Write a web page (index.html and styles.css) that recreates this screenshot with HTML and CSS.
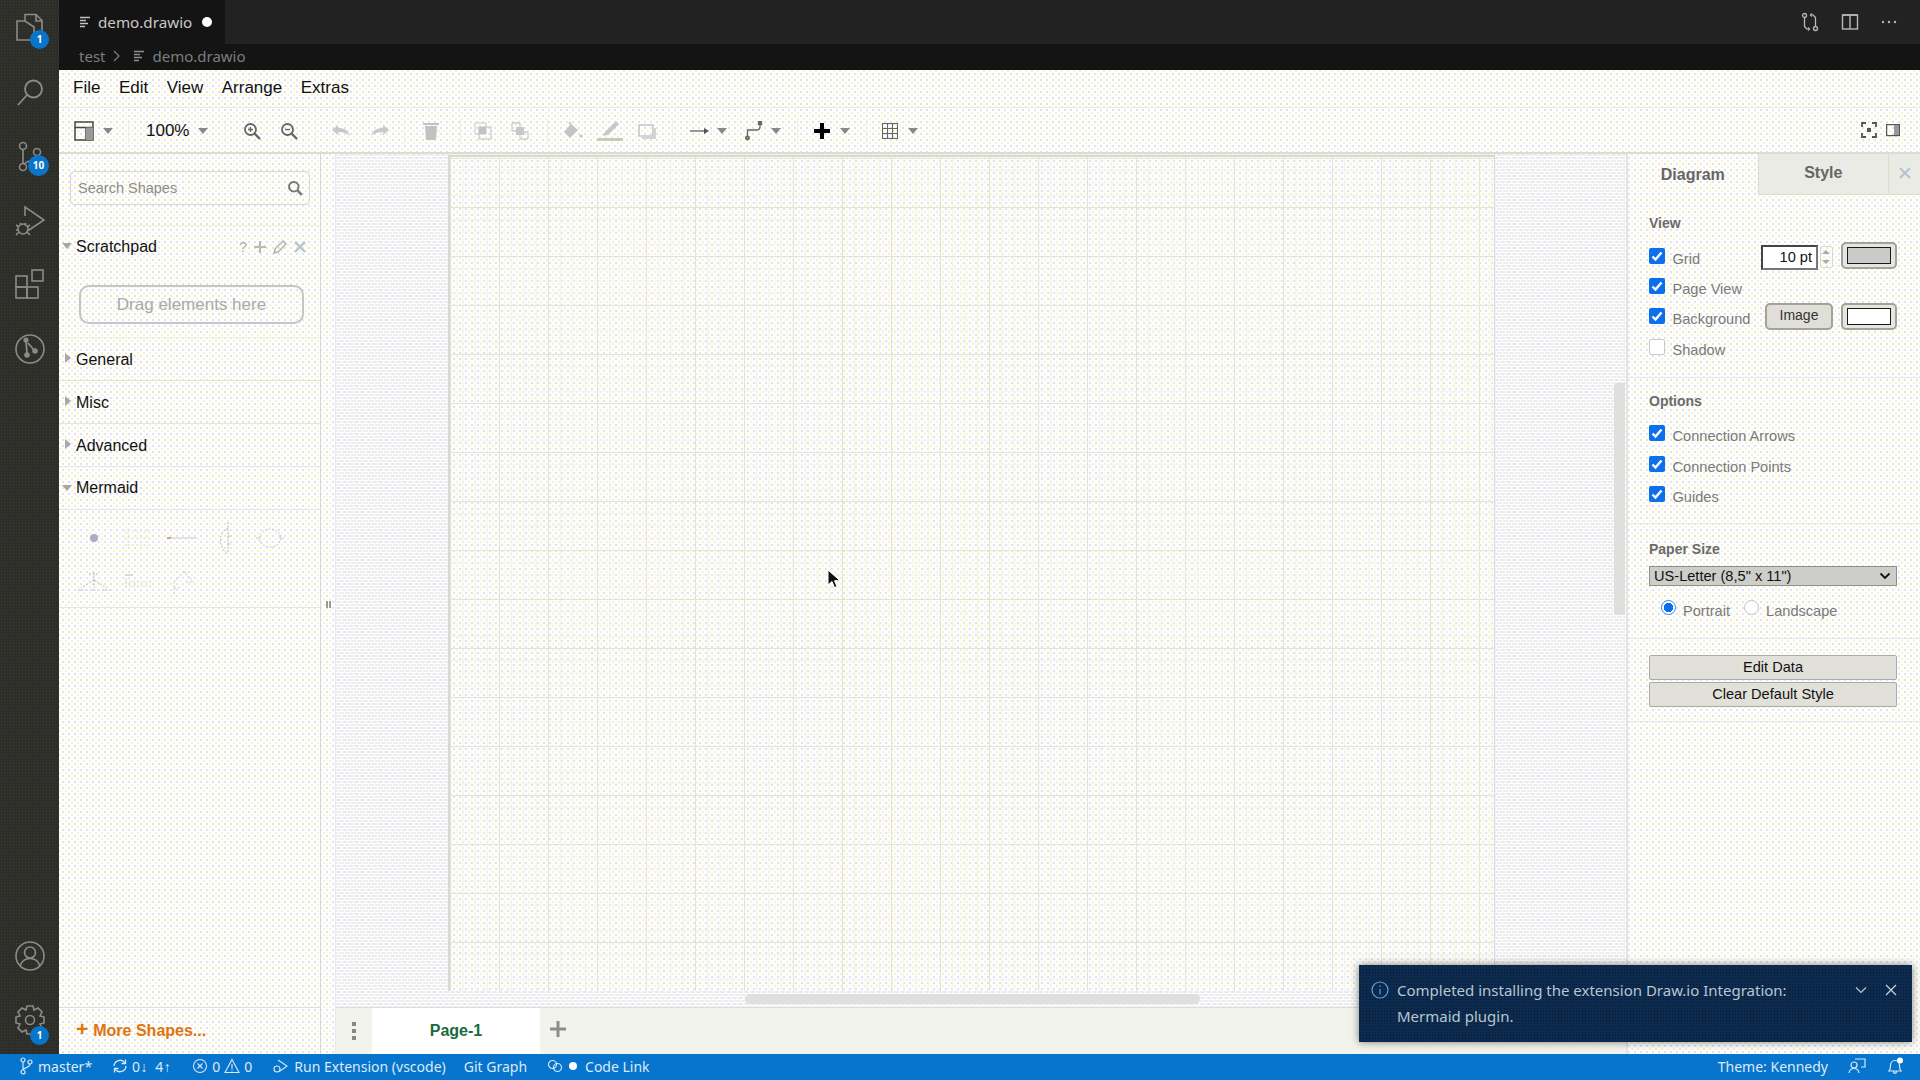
FILE: index.html
```html
<!DOCTYPE html>
<html lang="en">
<head>
    <meta charset="UTF-8">
    <title>demo.drawio</title>
    <link rel="stylesheet" href="styles.css">
</head>
<body>
<svg width="0" height="0" class="defs">
    <symbol id="caret" viewBox="0 0 10 6"><path d="M0 0h10L5 6z" fill="currentColor"/></symbol>
    <symbol id="check" viewBox="0 0 16 16"><path d="M3.500 8.500l3 3 6-7" fill="none" stroke="#fff" stroke-width="2.400"/></symbol>
    <symbol id="mag" viewBox="0 0 20 20"><circle cx="8.500" cy="8.500" r="6" fill="none" stroke="currentColor" stroke-width="2.400"/><path d="M13 13l5.500 5.500" stroke="currentColor" stroke-width="3"/></symbol>
    <symbol id="file-lines" viewBox="0 0 12 12"><path d="M1 1.500h10M1 4.500h6M1 7.500h8M1 10.500h5" stroke="currentColor" stroke-width="1.400" fill="none"/></symbol>
</svg>
<div class="app">
    <nav class="activity">
        <div class="activity-top">
            <div class="act-item">
                <svg width="34" height="34" viewBox="0 0 34 34" fill="none" stroke="#8b8b87" stroke-width="1.600"><path d="M12 9V2.500h11l6 6V24h-8"/><path d="M23 3v6h6"/><path d="M12 9H4v19h17V15z"/></svg>
                <span class="badge">1</span>
            </div>
            <div class="act-item">
                <svg width="34" height="34" viewBox="0 0 34 34" fill="none" stroke="#8b8b87" stroke-width="1.800"><circle cx="20.500" cy="13" r="8.500"/><path d="M14 19L5 29"/></svg>
            </div>
            <div class="act-item">
                <svg width="34" height="34" viewBox="0 0 34 34" fill="none" stroke="#8b8b87" stroke-width="1.600"><circle cx="10" cy="6" r="3.500"/><circle cx="10" cy="27" r="3.500"/><circle cx="24" cy="12" r="3.500"/><path d="M10 9.500v14M24 15.500c0 6-12 5-13 9"/></svg>
                <span class="badge badge-wide">10</span>
            </div>
            <div class="act-item">
                <svg width="34" height="34" viewBox="0 0 34 34" fill="none" stroke="#8b8b87" stroke-width="1.600"><path d="M12 12V3l19 13-15 10"/><circle cx="10" cy="25" r="5"/><path d="M3 21l3 2M3 26h2M3 31l3-3M17 21l-3 2M17 26h-2M17 31l-3-3M7 19l2 2M13 19l-2 2"/></svg>
            </div>
            <div class="act-item">
                <svg width="34" height="34" viewBox="0 0 34 34" fill="none" stroke="#8b8b87" stroke-width="1.600"><rect x="3" y="8" width="11" height="11"/><rect x="3" y="19" width="11" height="11"/><rect x="14" y="19" width="11" height="11"/><rect x="19" y="2" width="11" height="11"/></svg>
            </div>
            <div class="act-item">
                <svg width="34" height="34" viewBox="0 0 34 34" fill="none" stroke="#8b8b87" stroke-width="1.600"><circle cx="17" cy="17" r="14"/><path d="M13 8l1 14M15 11l6 7" stroke-width="1.800"/><circle cx="13" cy="8" r="1.800" fill="#8b8b87"/><circle cx="14" cy="23" r="2" fill="#8b8b87"/><circle cx="22" cy="19" r="2" fill="#8b8b87"/></svg>
            </div>
        </div>
        <div class="activity-bottom">
            <div class="act-item">
                <svg width="34" height="34" viewBox="0 0 34 34" fill="none" stroke="#8b8b87" stroke-width="1.600"><circle cx="17" cy="17" r="14"/><circle cx="17" cy="13.500" r="5.500"/><path d="M7 27c2-6 6-7.500 10-7.500s8 1.500 10 7.500"/></svg>
            </div>
            <div class="act-item">
                <svg width="34" height="34" viewBox="0 0 34 34" fill="none" stroke="#8b8b87" stroke-width="1.600"><path d="M14 3h6l1 4 4-2 4 4-2 4 4 1v6l-4 1 2 4-4 4-4-2-1 4h-6l-1-4-4 2-4-4 2-4-4-1v-6l4-1-2-4 4-4 4 2z"/><circle cx="17" cy="17" r="4.500"/></svg>
                <span class="badge badge-low">1</span>
            </div>
        </div>
    </nav>

    <div class="workbench">
        <div class="tabstrip">
            <div class="tab">
                <svg class="tab-icon" width="12" height="12"><use href="#file-lines"/></svg>
                <span class="tab-name">demo.drawio</span>
                <span class="tab-dot"></span>
            </div>
            <div class="editor-actions">
                <svg width="20" height="20" viewBox="0 0 20 20" fill="none" stroke="#b8b8b8" stroke-width="1.300"><circle cx="4.500" cy="3.500" r="2"/><circle cx="15.500" cy="16.500" r="2"/><path d="M4.500 5.500v9l3 3M15.500 14.500v-9l-3-3M12 1.500l-1.500 1.500 1.500 1.500M8 15.500l1.500 1.500-1.500 1.500"/></svg>
                <svg width="18" height="18" viewBox="0 0 18 18" fill="none" stroke="#b8b8b8" stroke-width="1.400"><rect x="1.500" y="2" width="15" height="14"/><path d="M9 2v14M1.500 2h15"/></svg>
                <svg width="18" height="18" viewBox="0 0 18 18" fill="#b8b8b8"><circle cx="3" cy="9" r="1.200"/><circle cx="9" cy="9" r="1.200"/><circle cx="15" cy="9" r="1.200"/></svg>
            </div>
        </div>
        <div class="breadcrumb">
            <span>test</span>
            <svg width="8" height="12" viewBox="0 0 8 12" fill="none" stroke="#7d7d7d" stroke-width="1.200"><path d="M1 1l5 5-5 5"/></svg>
            <svg class="crumb-icon" width="12" height="12"><use href="#file-lines"/></svg>
            <span>demo.drawio</span>
        </div>

        <div class="drawio">
            <div class="menubar">
                <span>File</span><span>Edit</span><span>View</span><span>Arrange</span><span>Extras</span>
            </div>
            <div class="toolbar">
                <div class="tb-group tb-view">
                    <svg width="20" height="20" viewBox="0 0 20 20" fill="none" stroke="#444" stroke-width="1.500"><rect x="1" y="1" width="18" height="18"/><path d="M1 6.500h18M12 6.500V19"/><rect x="12" y="6.500" width="7" height="12.500" fill="#999" stroke="none"/></svg>
                    <svg class="caret" width="10" height="6"><use href="#caret"/></svg>
                </div>
                <i class="sep"></i>
                <div class="tb-group tb-zoomtext"><span>100%</span><svg class="caret" width="10" height="6"><use href="#caret"/></svg></div>
                <i class="sep"></i>
                <div class="tb-group tb-zoombtns">
                    <svg width="18" height="18" viewBox="0 0 18 18" fill="none" stroke="#666" stroke-width="1.800"><circle cx="7.500" cy="7.500" r="5.500"/><path d="M11.500 11.500l5.500 5.500" stroke-width="2.400"/><path d="M5 7.500h5M7.500 5v5" stroke-width="1.300"/></svg>
                    <svg width="18" height="18" viewBox="0 0 18 18" fill="none" stroke="#666" stroke-width="1.800"><circle cx="7.500" cy="7.500" r="5.500"/><path d="M11.500 11.500l5.500 5.500" stroke-width="2.400"/><path d="M5 7.500h5" stroke-width="1.300"/></svg>
                </div>
                <i class="sep"></i>
                <div class="tb-group tb-history">
                    <svg width="18" height="14" viewBox="0 0 18 14" fill="#c8c8c8"><path d="M0 6l6-5v3c6 0 10 2 12 8-3-3-7-4-12-4v3z"/></svg>
                    <svg width="18" height="14" viewBox="0 0 18 14" fill="#c8c8c8"><path d="M18 6l-6-5v3C6 4 2 6 0 12c3-3 7-4 12-4v3z"/></svg>
                </div>
                <i class="sep"></i>
                <div class="tb-group tb-delete">
                    <svg width="16" height="18" viewBox="0 0 16 18" fill="#c2c2c2"><path d="M0 1h16v2H0zM2 4h12l-1 14H3z"/></svg>
                </div>
                <i class="sep"></i>
                <div class="tb-group tb-order">
                    <svg width="18" height="18" viewBox="0 0 18 18"><rect x="1" y="1" width="11" height="11" fill="none" stroke="#ccc"/><rect x="5" y="5" width="12" height="12" fill="none" stroke="#ccc" stroke-width="1.300"/><rect x="5" y="5" width="7" height="7" fill="#c2c2c2"/></svg>
                    <svg width="18" height="18" viewBox="0 0 18 18" fill="none" stroke="#ccc" stroke-width="1.300"><rect x="1" y="1" width="8" height="8" rx="1"/><rect x="9" y="10" width="8" height="7" rx="1"/><rect x="5" y="5" width="8" height="8" fill="#c8c8c8" stroke="none"/></svg>
                </div>
                <i class="sep"></i>
                <div class="tb-group tb-style">
                    <svg width="20" height="20" viewBox="0 0 20 20" fill="#c4c4c4"><path d="M8 3l-7 8 6 6 8-8z"/><path d="M6 1l3 4" stroke="#c4c4c4" stroke-width="1.500"/><circle cx="18" cy="15" r="1.500"/></svg>
                    <svg width="26" height="22" viewBox="0 0 26 22" fill="#c8c8c8"><path d="M19 1l3 3-11 11-5 1 2-4z"/><rect y="18" width="26" height="3"/></svg>
                    <svg width="20" height="16" viewBox="0 0 20 16" fill="none"><rect x="2" y="2" width="14" height="11" stroke="#c8c8c8" stroke-width="1.600"/><path d="M18 5v10H5" stroke="#d4d4d4" stroke-width="2"/></svg>
                </div>
                <i class="sep"></i>
                <div class="tb-group tb-conn">
                    <svg width="20" height="8" viewBox="0 0 20 8"><path d="M0 4h16" stroke="#555" stroke-width="1.200"/><path d="M14 1l5 3-5 3z" fill="#555"/></svg>
                    <svg class="caret" width="10" height="6"><use href="#caret"/></svg>
                </div>
                <div class="tb-group tb-way">
                    <svg width="18" height="20" viewBox="0 0 18 20" fill="none" stroke="#666" stroke-width="1.300"><circle cx="2.500" cy="17" r="1.800" fill="#888"/><path d="M2.500 15V9h9q3.500 0 3.500-3V3"/><rect x="13.500" y="0.500" width="3" height="3" fill="#666"/></svg>
                    <svg class="caret" width="10" height="6"><use href="#caret"/></svg>
                </div>
                <i class="sep"></i>
                <div class="tb-group tb-insert">
                    <svg width="16" height="16" viewBox="0 0 16 16"><path d="M6 0h4v6h6v4h-6v6H6v-6H0V6h6z" fill="#000"/></svg>
                    <svg class="caret" width="10" height="6"><use href="#caret"/></svg>
                </div>
                <i class="sep"></i>
                <div class="tb-group tb-table">
                    <svg width="16" height="16" viewBox="0 0 16 16" fill="none" stroke="#666" stroke-width="1.100"><rect x=".5" y=".5" width="15" height="15"/><path d="M5.500 .5v15M10.500 .5v15M.5 5.500h15M.5 10.500h15"/></svg>
                    <svg class="caret" width="10" height="6"><use href="#caret"/></svg>
                </div>
                <div class="tb-right">
                    <svg width="16" height="16" viewBox="0 0 16 16" fill="none" stroke="#555" stroke-width="1.800"><path d="M1 5V1h4M11 1h4v4M15 11v4h-4M5 15H1v-4"/><rect x="6" y="6" width="4" height="4" fill="#555" stroke="none"/></svg>
                    <svg width="14" height="14" viewBox="0 0 14 14" fill="none" stroke="#555" stroke-width="1.200"><rect x=".6" y="1.600" width="12.800" height="11"/><rect x="8" y="2" width="5" height="10" fill="#999" stroke="none"/></svg>
                </div>
            </div>

            <div class="main">
                <aside class="sidebar">
                    <div class="sidebar-scroll">
                        <div class="search-wrap">
                            <div class="search">
                                <span>Search Shapes</span>
                                <svg width="16" height="16" class="search-icon"><use href="#mag"/></svg>
                            </div>
                        </div>
                        <div class="sec-head sec-scratch">
                            <i class="tri tri-down"></i>
                            <span>Scratchpad</span>
                            <div class="scratch-tools">
                                <span class="q">?</span>
                                <svg width="12" height="12" viewBox="0 0 12 12"><path d="M5 0h2v5h5v2H7v5H5V7H0V5h5z" fill="#b5bcb8"/></svg>
                                <svg width="14" height="14" viewBox="0 0 14 14" fill="none" stroke="#b0b0a8" stroke-width="1.400"><path d="M10 1l3 3-8 8-4 1 1-4z"/></svg>
                                <svg width="12" height="12" viewBox="0 0 12 12" fill="none" stroke="#b3c4c8" stroke-width="2"><path d="M1 1l10 10M11 1L1 11"/></svg>
                            </div>
                        </div>
                        <div class="scratch-body"><div class="dropzone">Drag elements here</div></div>
                        <div class="sec-head sec-closed"><i class="tri tri-right"></i><span>General</span></div>
                        <div class="sec-head sec-closed"><i class="tri tri-right"></i><span>Misc</span></div>
                        <div class="sec-head sec-closed"><i class="tri tri-right"></i><span>Advanced</span></div>
                        <div class="sec-head"><i class="tri tri-down"></i><span>Mermaid</span></div>
                        <div class="mermaid">
                            <svg width="44" height="44" viewBox="0 0 44 44"><circle cx="22" cy="22" r="4" fill="#a9adc4"/></svg>
                            <svg width="44" height="44" viewBox="0 0 44 44" fill="none" stroke="#e4e2c4" stroke-dasharray="2 2"><path d="M8 15h28M8 22h28M8 29h28M12 12v20"/></svg>
                            <svg width="44" height="44" viewBox="0 0 44 44"><path d="M7 22h30" stroke="#d0cee4" stroke-width="1.200"/><path d="M7 22h4" stroke="#c98a8a" stroke-width="1.500"/></svg>
                            <svg width="44" height="44" viewBox="0 0 44 44" fill="none" stroke="#bcbcb0" stroke-dasharray="2 1.500"><path d="M24 6v32M24 12c-10 4-10 20 0 26M24 20h4M24 28h4"/></svg>
                            <svg width="44" height="44" viewBox="0 0 44 44" fill="none" stroke="#c6c4de" stroke-dasharray="2 1.500"><ellipse cx="22" cy="22" rx="11" ry="9"/><path d="M8 22h5M31 22h5"/></svg>
                            <svg width="44" height="44" viewBox="0 0 44 44" fill="none" stroke="#bcbcc6" stroke-dasharray="2 1.500"><path d="M22 12v10M22 20L9 28M22 20l13 8M22 20v8M17 14h10M6 30h8M18 30h8M30 30h8"/></svg>
                            <svg width="44" height="44" viewBox="0 0 44 44" fill="none" stroke="#dedcc4" stroke-dasharray="2 2"><path d="M9 15h8" stroke-dasharray="none" stroke="#bbb"/><path d="M9 22h28M9 26h26M10 18v10"/></svg>
                            <svg width="44" height="44" viewBox="0 0 44 44" fill="none" stroke="#cccad8" stroke-dasharray="2 1.500"><path d="M14 34V22l10-10 8 8M14 28h5M24 12h5M26 22h8"/></svg>
                        </div>
                    </div>
                    <div class="more-shapes"><span class="more-plus">+</span> More Shapes...</div>
                </aside>

                <div class="splitter"><i></i><i></i></div>

                <section class="center">
                    <div class="canvas">
                        <div class="page"></div>
                        <div class="vscroll"></div>
                        <div class="hscroll"></div>
                    </div>
                    <div class="pagebar">
                        <div class="page-menu"><i></i><i></i><i></i></div>
                        <div class="page-tab">Page-1</div>
                        <svg class="page-add" width="16" height="16" viewBox="0 0 16 16"><path d="M6.500 0h3v6.500H16v3H9.500V16h-3V9.500H0v-3h6.500z" fill="#8c8c8c"/></svg>
                    </div>
                </section>

                <aside class="panel">
                    <div class="panel-tabs">
                        <div class="ptab ptab-on">Diagram</div>
                        <div class="ptab">Style</div>
                        <div class="ptab ptab-x">
                            <svg width="12" height="12" viewBox="0 0 12 12" fill="none" stroke="#b3c4cc" stroke-width="2"><path d="M1 1l10 10M11 1L1 11"/></svg>
                        </div>
                    </div>

                    <div class="psec psec-view">
                        <div class="psec-title">View</div>
                        <div class="prow">
                            <span class="cb on"><svg width="16" height="16"><use href="#check"/></svg></span>
                            <span class="cb-label">Grid</span>
                            <div class="prow-end">
                                <div class="pt-input">10 pt</div>
                                <div class="spinner"><svg width="12" height="22" viewBox="0 0 12 22"><path d="M2 8l4-4 4 4zM2 14l4 4 4-4z" fill="#aaa"/></svg></div>
                                <div class="swatch swatch-grey"><i></i></div>
                            </div>
                        </div>
                        <div class="prow">
                            <span class="cb on"><svg width="16" height="16"><use href="#check"/></svg></span>
                            <span class="cb-label">Page View</span>
                        </div>
                        <div class="prow">
                            <span class="cb on"><svg width="16" height="16"><use href="#check"/></svg></span>
                            <span class="cb-label">Background</span>
                            <div class="prow-end">
                                <div class="img-btn">Image</div>
                                <div class="swatch"><i></i></div>
                            </div>
                        </div>
                        <div class="prow">
                            <span class="cb"></span>
                            <span class="cb-label">Shadow</span>
                        </div>
                    </div>

                    <div class="psec psec-options">
                        <div class="psec-title">Options</div>
                        <div class="prow">
                            <span class="cb on"><svg width="16" height="16"><use href="#check"/></svg></span>
                            <span class="cb-label">Connection Arrows</span>
                        </div>
                        <div class="prow">
                            <span class="cb on"><svg width="16" height="16"><use href="#check"/></svg></span>
                            <span class="cb-label">Connection Points</span>
                        </div>
                        <div class="prow">
                            <span class="cb on"><svg width="16" height="16"><use href="#check"/></svg></span>
                            <span class="cb-label">Guides</span>
                        </div>
                    </div>

                    <div class="psec psec-paper">
                        <div class="psec-title">Paper Size</div>
                        <div class="paper-select">
                            <span>US-Letter (8,5" x 11")</span>
                            <svg width="12" height="8" viewBox="0 0 12 8" fill="none" stroke="#111" stroke-width="1.800"><path d="M1.500 1.500L6 6l4.500-4.500"/></svg>
                        </div>
                        <div class="orient">
                            <span class="radio on"></span><span class="cb-label">Portrait</span>
                            <span class="radio"></span><span class="cb-label">Landscape</span>
                        </div>
                    </div>

                    <div class="psec psec-btns">
                        <div class="wide-btn">Edit Data</div>
                        <div class="wide-btn">Clear Default Style</div>
                    </div>
                </aside>
            </div>
        </div>
    </div>
</div>

<footer class="status">
    <div class="st-left">
        <span class="st-item st-branch"><svg width="14" height="18" viewBox="0 0 14 18" fill="none" stroke="#d8e8f6" stroke-width="1.200"><circle cx="4" cy="3" r="2"/><circle cx="4" cy="15" r="2"/><circle cx="11" cy="5" r="2"/><path d="M4 5v8M11 7c0 4-6 3-7 6"/></svg>master*</span>
        <span class="st-item st-sync"><svg width="16" height="16" viewBox="0 0 16 16" fill="none" stroke="#d8e8f6" stroke-width="1.300"><path d="M2 8a6 6 0 0 1 11-3M14 8a6 6 0 0 1-11 3"/><path d="M13.500 1.500V5.500H9.500M2.500 14.500V10.500H6.500"/></svg>0↓ 4↑</span>
        <span class="st-item st-problems"><svg width="16" height="16" viewBox="0 0 16 16" fill="none" stroke="#d8e8f6" stroke-width="1.100"><circle cx="8" cy="8" r="6.500"/><path d="M5.500 5.500l5 5M10.500 5.500l-5 5"/></svg>0<svg width="16" height="16" viewBox="0 0 16 16" fill="none" stroke="#d8e8f6" stroke-width="1.100"><path d="M8 1.500l7 13H1zM8 6v5M8 12v1.200"/></svg>0</span>
        <span class="st-item st-run"><svg width="16" height="16" viewBox="0 0 16 16" fill="none" stroke="#d8e8f6" stroke-width="1.100"><path d="M6 2l9 6-7 5"/><circle cx="5" cy="11" r="3"/></svg>Run Extension (vscode)</span>
        <span class="st-item st-git">Git Graph</span>
        <span class="st-item st-link"><svg width="16" height="14" viewBox="0 0 16 14" fill="none" stroke="#d8e8f6" stroke-width="1.200"><circle cx="5.500" cy="5.500" r="4"/><circle cx="10.500" cy="8.500" r="4"/></svg><i class="st-dot"></i>Code Link</span>
    </div>
    <div class="st-right">
        <span>Theme: Kennedy</span>
        <svg width="18" height="18" viewBox="0 0 18 18" fill="none" stroke="#d8e8f6" stroke-width="1.200"><circle cx="6" cy="8" r="3"/><path d="M1 16c.5-3 2.500-4.500 5-4.500s4.500 1.500 5 4.500M7 2h10v8h-4"/></svg>
        <svg width="18" height="18" viewBox="0 0 18 18" fill="none" stroke="#d8e8f6" stroke-width="1.200"><path d="M3 14c1.500-1.500 1.500-3 1.500-5.500S6 3.500 9 3.500 13.500 6 13.500 8.500 13.500 12.500 15 14zM7.500 14c0 3 3 3 3 0"/><circle cx="14" cy="3.500" r="3" fill="#fff" stroke="none"/></svg>
    </div>
</footer>

<div class="toast">
    <svg class="toast-info" width="18" height="18" viewBox="0 0 18 18" fill="none" stroke="#5ba3dc" stroke-width="1.200"><circle cx="9" cy="9" r="8"/><path d="M9 8v5.500M9 4.500V6"/></svg>
    <div class="toast-msg">Completed installing the extension Draw.io Integration:<br>Mermaid plugin.</div>
    <div class="toast-tools">
        <svg width="14" height="14" viewBox="0 0 14 14" fill="none" stroke="#b7c6d2" stroke-width="1.200"><path d="M2 4.500l5 5 5-5"/></svg>
        <svg width="14" height="14" viewBox="0 0 14 14" fill="none" stroke="#c8d3dc" stroke-width="1.200"><path d="M2 2l10 10M12 2L2 12"/></svg>
    </div>
</div>

<svg class="cursor" width="14" height="20" viewBox="0 0 14 20"><path d="M1 1v15l4-3.500 2.500 6 2.500-1-2.500-5.800H13z" fill="#111" stroke="#fff" stroke-width="1"/></svg>
</body>
</html>
```

FILE: styles.css
```css
* {
    box-sizing: border-box;
}

html, body {
    margin: 0;
    height: 100%;
    overflow: hidden;
}

body {
    font-family: "Liberation Sans", Arial, sans-serif;
    color: #111;
    background: #fff;
}

.defs {
    position: absolute;
}

.app {
    display: flex;
    height: 1054px;
}

/* activity bar */
.activity {
    width: 59px;
    flex: none;
    display: flex;
    flex-direction: column;
    justify-content: space-between;
    background-color: #2d2d29;
    background-image: radial-gradient(#3b3b2e 35%, transparent 40%);
    background-size: 3px 3px;
}

.activity-top {
    margin-top: -3px;
}

.activity-bottom {
    padding-bottom: 2px;
}

.act-item {
    position: relative;
    height: 64px;
    display: flex;
    align-items: center;
    justify-content: center;
}

.badge {
    position: absolute;
    left: 30px;
    top: 33px;
    width: 19px;
    height: 19px;
    border-radius: 50%;
    background: #0a74c9;
    color: #fff;
    font: bold 10px/19px "Noto Sans", sans-serif;
    text-align: center;
}

.badge-wide {
    left: 28px;
    width: 21px;
    height: 21px;
    line-height: 21px;
    top: 30px;
}

.badge-low {
    top: 38px;
}

.workbench {
    flex: 1;
    min-width: 0;
    display: flex;
    flex-direction: column;
}

/* tabs */
.tabstrip {
    height: 44px;
    flex: none;
    display: flex;
    justify-content: space-between;
    background-color: #222;
    background-image: radial-gradient(#0d0d0d 40%, transparent 45%);
    background-size: 2px 2px;
}

.tab {
    width: 166px;
    height: 44px;
    display: flex;
    align-items: center;
    padding-left: 20px;
    padding-bottom: 1px;
    background: #141414;
    color: #c8c8c8;
}

.tab-icon {
    color: #c0c0c0;
}

.tab-name {
    margin-left: 7px;
    font: 15.200px "Noto Sans", sans-serif;
}

.tab-dot {
    width: 10px;
    height: 10px;
    margin-left: 10px;
    border-radius: 50%;
    background: #fff;
}

.editor-actions {
    display: flex;
    align-items: center;
    gap: 21px;
    padding-right: 22px;
}

.breadcrumb {
    height: 26px;
    flex: none;
    display: flex;
    align-items: center;
    gap: 8px;
    padding-left: 20px;
    padding-bottom: 2px;
    background: #141414;
    color: #7d7d7d;
    font: 15px "Noto Sans", sans-serif;
}

.crumb-icon {
    margin-left: 4px;
    margin-right: -1px;
    color: #8d8d8d;
}

/* draw.io, the gif dither on white is faked with two dot layers */
.drawio {
    flex: 1;
    min-height: 0;
    display: flex;
    flex-direction: column;
    background-color: #fefefe;
    background-image:
        radial-gradient(circle at 1px 1px, #f6f5bd 0.7px, transparent 0.8px),
        radial-gradient(circle at 4px 4px, #dfdff0 0.7px, transparent 0.8px);
    background-size: 6px 6px;
}

.menubar {
    height: 38px;
    flex: none;
    display: flex;
    align-items: center;
    padding-left: 14px;
    padding-bottom: 1px;
    gap: 18.500px;
    font-size: 17px;
    border-bottom: 1px solid #ece9d8;
}

.toolbar {
    height: 46px;
    flex: none;
    display: flex;
    align-items: center;
    padding-top: 1px;
    border-bottom: 2px solid #dcdcd6;
    position: relative;
}

.sep {
    width: 1px;
    height: 24px;
    flex: none;
    background: #eeeeea;
}

.tb-group {
    display: flex;
    align-items: center;
    height: 100%;
}

.caret {
    color: #888;
}

.tb-view {
    width: 69px;
    padding-left: 15px;
    gap: 9px;
}

.tb-zoomtext {
    width: 96px;
    padding-left: 17px;
    gap: 9px;
    font-size: 17px;
}

.tb-zoombtns {
    width: 89px;
    padding-left: 17px;
    gap: 19px;
}

.tb-history {
    width: 88px;
    padding-left: 16px;
    gap: 21px;
}

.tb-delete {
    width: 55px;
    padding-left: 18px;
}

.tb-order {
    width: 86px;
    padding-left: 13px;
    gap: 19px;
}

.tb-style {
    width: 124px;
    padding-left: 15px;
    gap: 14px;
}

.tb-conn {
    width: 72px;
    padding-left: 17px;
    gap: 7px;
}

.tb-way {
    width: 52px;
    gap: 8px;
}

.tb-insert {
    width: 68px;
    padding-left: 16px;
    gap: 10px;
}

.tb-table {
    padding-left: 15px;
    gap: 10px;
}

.tb-right {
    position: absolute;
    right: 20px;
    top: 14px;
    display: flex;
    align-items: center;
    gap: 9px;
}

.main {
    flex: 1;
    min-height: 0;
    display: flex;
}

/* shapes sidebar */
.sidebar {
    width: 262px;
    flex: none;
    display: flex;
    flex-direction: column;
    border-right: 1px solid #d8d8d8;
}

.sidebar-scroll {
    flex: 1;
    min-height: 0;
}

.search-wrap {
    height: 72px;
    padding: 17px 11px 0;
    border-bottom: 1px solid #f0efdc;
}

.search {
    height: 34px;
    width: 240px;
    display: flex;
    align-items: center;
    justify-content: space-between;
    padding: 0 6px 1px 7px;
    border: 1px solid #d8d8d4;
    border-radius: 4px;
    color: #8d8d8d;
    font-size: 14.500px;
}

.search-icon {
    color: #777;
}

.sec-head {
    height: 43px;
    display: flex;
    align-items: center;
    padding-left: 17px;
    position: relative;
    border-bottom: 1px solid #e4e4e2;
    font-size: 16px;
}

.sec-closed {
    padding-top: 2px;
}

.sec-scratch {
    height: 40px;
    padding-top: 1px;
    border-bottom: none;
}

.tri {
    position: absolute;
    width: 0;
    height: 0;
}

.tri-down {
    left: 3px;
    top: 50%;
    margin-top: -3px;
    border-left: 5px solid transparent;
    border-right: 5px solid transparent;
    border-top: 6px solid #a8a8a8;
}

.tri-right {
    left: 6px;
    top: 50%;
    margin-top: -6px;
    border-top: 5px solid transparent;
    border-bottom: 5px solid transparent;
    border-left: 6px solid #a8a8a8;
}

.scratch-tools {
    margin-left: auto;
    margin-right: 14px;
    display: flex;
    align-items: center;
    gap: 7px;
}

.q {
    color: #b0b0a4;
    font-size: 14px;
}

.scratch-body {
    height: 72px;
    padding: 19px 0 0 20px;
    border-bottom: 1px solid #f0efdc;
}

.dropzone {
    width: 225px;
    height: 39px;
    border: 2px solid #c4c4ca;
    border-radius: 10px;
    color: #a9a9ad;
    font-size: 17px;
    line-height: 35px;
    text-align: center;
}

.mermaid {
    height: 98px;
    padding: 6px 0 0 13px;
    display: flex;
    flex-wrap: wrap;
    align-content: flex-start;
    border-bottom: 1px solid #e4e4e2;
}

.mermaid svg {
    flex: none;
}

.more-shapes {
    height: 47px;
    flex: none;
    display: flex;
    align-items: center;
    padding-left: 17px;
    padding-bottom: 1px;
    border-top: 1px solid #dedee4;
    color: #de7510;
    font-weight: bold;
    font-size: 16px;
    gap: 5px;
}

.more-plus {
    font-size: 21px;
    line-height: 20px;
    margin-top: -4px;
}

/* little handle between sidebar and canvas */
.splitter {
    width: 15px;
    flex: none;
    display: flex;
    justify-content: center;
    align-items: center;
    gap: 1px;
    border-right: 1px solid #e8e8f0;
}

.splitter i {
    width: 2px;
    height: 7px;
    background: #999;
}

.center {
    flex: 1;
    min-width: 0;
    display: flex;
    flex-direction: column;
}

.canvas {
    flex: 1;
    min-height: 0;
    position: relative;
    overflow: hidden;
    padding: 1px 0 0 112px;
    background-image: radial-gradient(circle at 1px 1px, #ecedf3 0.7px, transparent 0.8px);
    background-size: 3px 3px;
}

.page {
    width: 1047px;
    height: 836px;
    border: 2px solid #d8d8d4;
    border-width: 2px 1px 0 2px;
    background-color: #fdfdfe;
    background-image:
        linear-gradient(#e4e4d8 1px, transparent 1px),
        linear-gradient(90deg, #e4e4d8 1px, transparent 1px),
        linear-gradient(#f3f3ea 1px, transparent 1px),
        linear-gradient(90deg, #f3f3ea 1px, transparent 1px),
        radial-gradient(circle at 1px 1px, #f6f5bd 0.7px, transparent 0.8px),
        radial-gradient(circle at 4px 4px, #dfdff0 0.7px, transparent 0.8px);
    background-size: 49px 49px, 49px 49px, 12.250px 12.250px, 12.250px 12.250px, 6px 6px, 6px 6px;
    background-position: 0 1px, 0 0, 0 1px, 0 0, 0 0, 0 0;
}

.vscroll {
    position: absolute;
    right: 1px;
    top: 229px;
    width: 11px;
    height: 232px;
    border-radius: 3px 0 0 3px;
    background: #dedede;
}

.hscroll {
    position: absolute;
    left: 409px;
    bottom: 3px;
    width: 455px;
    height: 10px;
    border-radius: 5px;
    background: #dfdfdf;
}

.pagebar {
    height: 47px;
    flex: none;
    display: flex;
    align-items: center;
    border-top: 1px solid #dcdce2;
    background: #f3f3ee;
}

.page-menu {
    width: 36px;
    display: flex;
    flex-direction: column;
    align-items: center;
    gap: 3px;
}

.page-menu i {
    width: 4px;
    height: 4px;
    background: #888;
}

.page-tab {
    width: 168px;
    height: 46px;
    display: flex;
    align-items: center;
    justify-content: center;
    padding-bottom: 1px;
    background: #fff;
    color: #1a6a3d;
    font-size: 16px;
    font-weight: bold;
}

.page-add {
    margin-left: 10px;
    margin-top: -4px;
}

/* format panel */
.panel {
    width: 294px;
    flex: none;
    border-left: 2px solid #e4e4e6;
    color: #666;
}

.panel-tabs {
    height: 41px;
    display: flex;
}

.ptab {
    width: 131px;
    height: 41px;
    display: flex;
    align-items: center;
    justify-content: center;
    padding-bottom: 3px;
    background: #ebebe6;
    border: 1px solid #dcdcd4;
    border-width: 0 1px 1px 0;
    font-size: 16px;
    font-weight: bold;
}

.ptab-on {
    background: transparent;
    padding-bottom: 0;
    border-bottom: none;
}

.ptab-x {
    width: 31px;
    border-right: none;
}

.psec {
    padding: 0 23px 0 21px;
    border-bottom: 1px solid #e6e6e4;
}

.psec-title {
    font-size: 14px;
    font-weight: bold;
    color: #6b6b6b;
}

.psec-view {
    height: 183px;
    padding-top: 20px;
}

.psec-view .psec-title {
    margin-bottom: 11px;
}

.psec-options {
    height: 146px;
    padding-top: 15px;
}

.psec-options .psec-title {
    margin-bottom: 10px;
}

.prow {
    height: 30.300px;
    display: flex;
    align-items: center;
    position: relative;
}

.psec-options .prow {
    height: 30.800px;
}

.prow-end {
    position: absolute;
    right: 0;
    top: 0;
    display: flex;
    align-items: center;
    height: 100%;
}

.cb {
    width: 16px;
    height: 16px;
    flex: none;
    margin-top: -3px;
    border: 1px solid #c9c9cf;
    border-radius: 2px;
    background: #fff;
    display: block;
}

.cb.on {
    border: none;
    background: #0b6fee;
}

.cb svg {
    display: block;
}

.cb-label {
    margin-left: 7.500px;
    margin-top: 3px;
    font-size: 14.600px;
    color: #7a7a7a;
}

.pt-input {
    width: 57px;
    height: 25px;
    padding-right: 4px;
    border: 2px solid #444;
    border-right-color: #777;
    border-bottom-color: #777;
    color: #111;
    background: #fff;
    font-size: 14.600px;
    line-height: 21px;
    text-align: right;
}

.spinner {
    width: 13px;
    height: 22px;
    margin: 0 8px 0 2px;
    border: 1px solid #d8d8d8;
    border-radius: 3px;
}

.spinner svg {
    display: block;
    margin-left: -1px;
    margin-top: -1px;
}

.swatch {
    width: 56px;
    height: 27px;
    margin-top: -3px;
    padding: 3px 4px;
    border: 2px solid #a2a29a;
    border-radius: 5px;
    background: #e6e6e0;
}

.swatch i {
    display: block;
    width: 100%;
    height: 100%;
    border: 1.500px solid #1a1a1a;
    background: #fff;
}

.swatch-grey i {
    background: #cacaca;
}

.img-btn {
    width: 68px;
    height: 27px;
    margin-top: -3px;
    margin-right: 8px;
    border: 2px solid #a2a29a;
    border-radius: 5px;
    background: #dfdfd8;
    color: #333;
    font-size: 14px;
    line-height: 21px;
    text-align: center;
}

.psec-paper {
    height: 115px;
    padding-top: 17px;
}

.paper-select {
    width: 248px;
    height: 20px;
    margin-top: 9px;
    padding: 0 5px 0 4px;
    display: flex;
    align-items: center;
    justify-content: space-between;
    background: #cdcdca;
    border: 1px solid #8f8f8f;
    color: #111;
    font-size: 14.600px;
}

.orient {
    display: flex;
    align-items: center;
    margin-top: 14px;
    padding-left: 12px;
}

.radio {
    width: 15px;
    height: 15px;
    flex: none;
    margin-top: -4px;
    border: 1px solid #c4c4c4;
    border-radius: 50%;
    background: #fff;
}

.radio.on {
    border: 1px solid #3a87e6;
    background: radial-gradient(#0b6fee 0 4.500px, #fff 5px);
}

.orient .cb-label {
    margin-left: 7px;
    margin-right: 14px;
}

.psec-btns {
    height: 83px;
    padding-top: 16px;
}

.wide-btn {
    width: 248px;
    height: 25px;
    margin-bottom: 2px;
    border: 1px solid #aaa;
    border-radius: 2px;
    background: #e1e1da;
    color: #111;
    font-size: 14.600px;
    line-height: 23px;
    text-align: center;
}

/* status bar */
.status {
    height: 26px;
    display: flex;
    align-items: center;
    justify-content: space-between;
    padding-bottom: 2px;
    background: #0774cd;
    color: #dcebf7;
    font: 14px "Noto Sans", sans-serif;
}

.st-left {
    display: flex;
    align-items: center;
    padding-left: 19px;
}

.st-item {
    display: flex;
    align-items: center;
    gap: 4px;
    margin-right: 18px;
}

.st-branch {
    gap: 5px;
    margin-right: 20px;
}

.st-sync {
    letter-spacing: 0.500px;
    word-spacing: 3px;
    margin-right: 21px;
}

.st-problems {
    margin-right: 20px;
}

.st-run {
    gap: 6px;
}

.st-git {
    margin-right: 20px;
}

.st-link {
    gap: 6px;
}

.st-dot {
    width: 8px;
    height: 8px;
    border-radius: 50%;
    background: #fff;
    margin-right: 2px;
}

.st-right {
    display: flex;
    align-items: center;
    gap: 20px;
    padding-right: 16px;
}

/* notification over the canvas */
.toast {
    position: absolute;
    left: 1359px;
    top: 965px;
    width: 553px;
    height: 77px;
    display: flex;
    padding: 12px 14px 0 12px;
    background-color: #0c2b4f;
    background-image: radial-gradient(#07182e 40%, transparent 45%);
    background-size: 3px 3px;
    color: #b8c6d0;
    box-shadow: 0 0 8px rgba(0, 0, 0, 0.5);
    font: 15px/26px "Noto Sans", sans-serif;
}

.toast-info {
    flex: none;
    margin-top: 4px;
}

.toast-msg {
    margin-left: 8px;
}

.toast-tools {
    margin-left: auto;
    display: flex;
    gap: 16px;
    padding-top: 6px;
    align-items: flex-start;
}

.cursor {
    position: absolute;
    left: 827px;
    top: 569px;
}
```
